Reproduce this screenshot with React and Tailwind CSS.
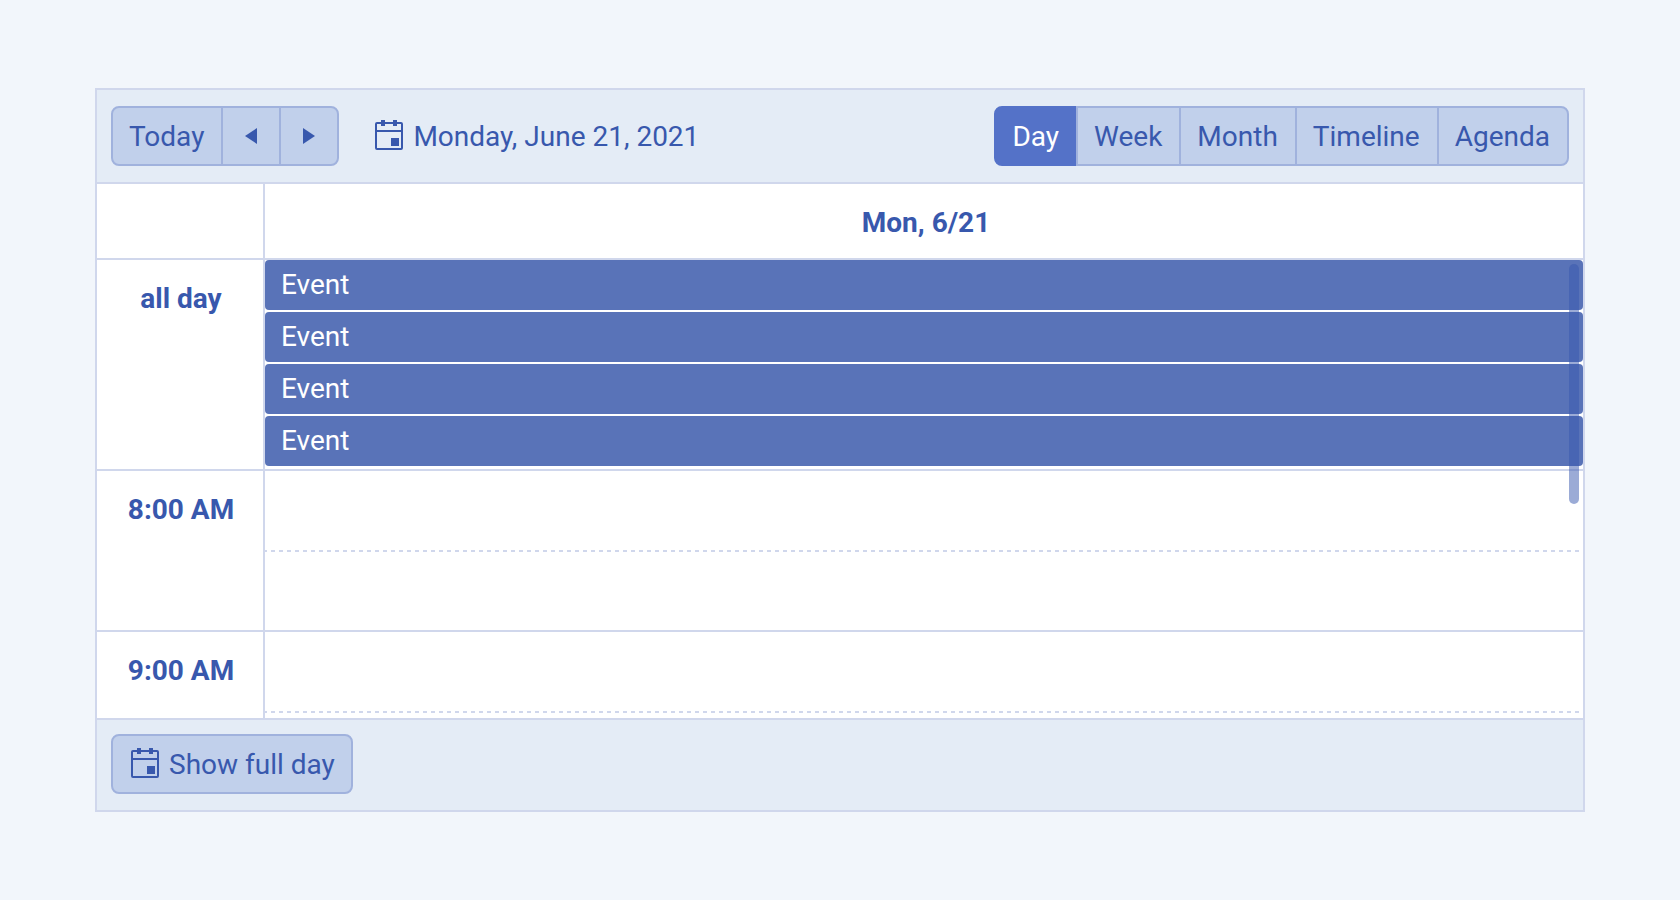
const views = ["Day", "Week", "Month", "Timeline", "Agenda"];
const hours = ["8:00 AM", "9:00 AM"];
const allDayEvents = ["Event", "Event", "Event", "Event"];

const buttonBase =
  "relative flex h-15 items-center justify-center gap-2 border-2 first:rounded-l-lg last:rounded-r-lg";
const buttonText = "pr-[17px] pl-4";
const buttonIdle = "border-[#a0b2dd] bg-[#c1d0eb] text-[#3858ad]";
const buttonActive = "border-[#5472c8] bg-[#5472c8] text-white";

function CalendarIcon() {
  return (
    <svg className="size-8 shrink-0" viewBox="0 0 32 32" aria-hidden="true">
      <rect x="3" y="3" width="26" height="26" rx="1" fill="none" stroke="currentColor" strokeWidth="2" />
      <path d="M3 10h26v2H3zM8 0h4v6H8zM20 0h4v6h-4zM18 18h8v8h-8z" fill="currentColor" />
    </svg>
  );
}

function Arrow({ path }) {
  return (
    <svg className="h-4 w-3" viewBox="0 0 12 16" aria-hidden="true">
      <path d={path} fill="currentColor" />
    </svg>
  );
}

function DashedLine() {
  return (
    <div className="h-0.5 bg-[repeating-linear-gradient(90deg,#d0d7ec_0px,#d0d7ec_2px,transparent_2px,transparent_6px,#d0d7ec_6px,#d0d7ec_8px)]" />
  );
}

function Toolbar() {
  return (
    <header className="flex items-center justify-between border-b-2 border-[#d0d7ec] bg-[#e4ecf6] px-3.5 py-4">
      <div className="flex items-center gap-[34px]">
        <div className="flex">
          <button type="button" className={`${buttonBase} ${buttonText} ${buttonIdle}`}>
            Today
          </button>
          <button type="button" aria-label="Previous day" className={`${buttonBase} ${buttonIdle} -ml-0.5 w-15`}>
            <Arrow path="M12 0v16L0 8z" />
          </button>
          <button type="button" aria-label="Next day" className={`${buttonBase} ${buttonIdle} -ml-0.5 w-15`}>
            <Arrow path="M0 0v16l12-8z" />
          </button>
        </div>
        <div className="flex items-center gap-2">
          <CalendarIcon />
          <span>Monday, June 21, 2021</span>
        </div>
      </div>
      <div className="flex">
        {views.map((view, i) => (
          <button
            key={view}
            type="button"
            aria-pressed={i === 0}
            className={`${buttonBase} ${buttonText} ${i === 0 ? buttonActive : `${buttonIdle} -ml-0.5`}`}
          >
            {view}
          </button>
        ))}
      </div>
    </header>
  );
}

function Schedule() {
  const label =
    "border-r-2 border-b-2 border-[#d0d7ec] pr-0 pl-0.5 pt-5 align-top text-center font-bold leading-[38px]";
  return (
    <div className="relative h-[534px] overflow-hidden bg-white">
      <table className="w-full table-fixed border-separate border-spacing-0">
        <colgroup>
          <col className="w-[168px]" />
          <col />
        </colgroup>
        <thead>
          <tr className="h-19">
            <td className="border-r-2 border-b-2 border-[#d0d7ec]" />
            <th scope="col" className="border-b-2 border-[#d0d7ec] pt-0.5 pr-0 pb-0 pl-1 font-bold">
              Mon, 6/21
            </th>
          </tr>
        </thead>
        <tbody>
          <tr>
            <th scope="row" className={label}>all day</th>
            <td className="border-b-2 border-[#d0d7ec] px-0 pt-0 pb-[3px]">
              <div className="flex flex-col gap-0.5">
                {allDayEvents.map((title, i) => (
                  <div key={i} className="flex h-[50px] items-center rounded bg-[#5973b8] px-4 leading-9 text-white">
                    {title}
                  </div>
                ))}
              </div>
            </td>
          </tr>
          {hours.map((hour) => (
            <tr key={hour}>
              <th scope="row" className={label}>{hour}</th>
              <td className="border-b-2 border-[#d0d7ec] p-0">
                <div className="h-[79px]" />
                <DashedLine />
                <div className="h-[78px]" />
              </td>
            </tr>
          ))}
        </tbody>
      </table>
      <div className="absolute top-20 right-1 h-60 w-2.5 rounded-full bg-[#3858ad]/50" />
    </div>
  );
}

export default function App() {
  return (
    <div className="min-h-screen bg-[#f2f6fb] px-[95px] py-22 font-['Roboto',sans-serif] text-[28px] leading-[35px] text-[#3858ad]">
      <main className="border-2 border-[#d0d7ec]">
        <Toolbar />
        <Schedule />
        <footer className="flex border-t-2 border-[#d0d7ec] bg-[#e4ecf6] px-3.5 pt-3.5 pb-4">
          <button type="button" className={`${buttonBase} ${buttonIdle} px-4`}>
            <CalendarIcon />
            Show full day
          </button>
        </footer>
      </main>
    </div>
  );
}
